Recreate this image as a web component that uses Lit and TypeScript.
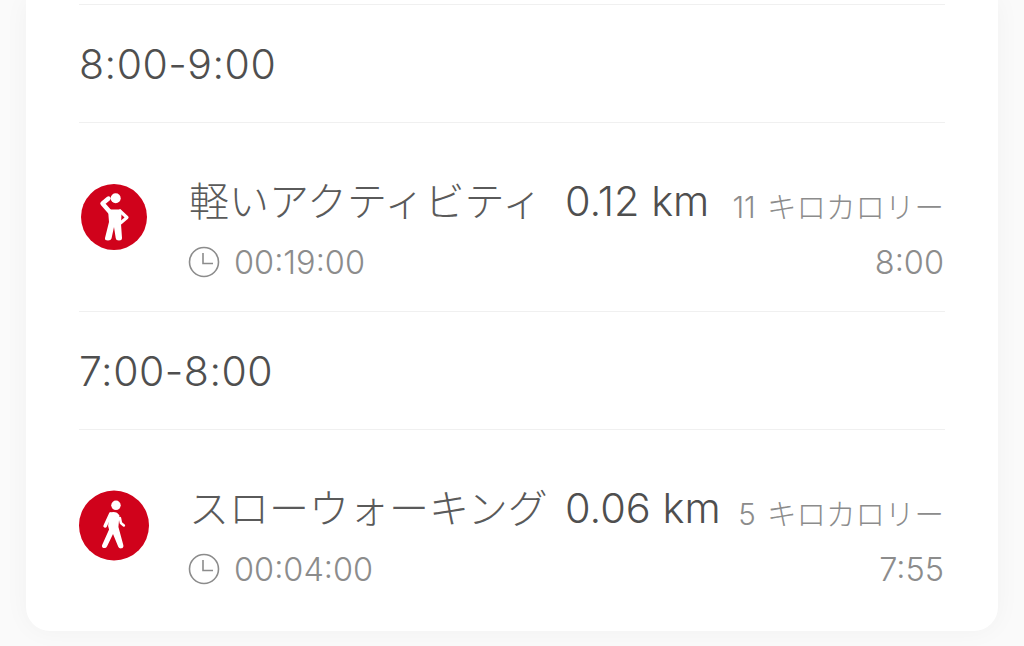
import { LitElement, html, css, svg } from "lit";
import { customElement } from "lit/decorators.js";

const stretching = svg`
  <circle cx="33" cy="33" r="33" fill="#d0021b"></circle>
  <circle cx="34.7" cy="14.2" r="5" fill="#fff"></circle>
  <path d="M28.5 27.5 L21.5 19.5 L27.5 14.5" fill="none" stroke="#fff" stroke-width="4.4" stroke-linecap="round" stroke-linejoin="round"></path>
  <path d="M39 27 L46 33.5 L39.5 39" fill="none" stroke="#fff" stroke-width="3.2" stroke-linecap="round" stroke-linejoin="round"></path>
  <path d="M27 25.5 H40 L40.5 30 L40 40 L41 54 Q41 56.5 38 56.5 Q35 56.5 34.7 54 L33 43 L30.5 54.5 Q30 56.5 27 56.5 Q23.5 56.5 24 54 L28 38 Z" fill="#fff"></path>
`;

const walking = svg`
  <circle cx="35.5" cy="35.5" r="35.5" fill="#d0021b"></circle>
  <circle cx="37.5" cy="15" r="4.8" fill="#fff"></circle>
  <path d="M32 24 L26.5 36" fill="none" stroke="#fff" stroke-width="3.6" stroke-linecap="round"></path>
  <path d="M41.5 28 L42.5 33 L45.5 35.5" fill="none" stroke="#fff" stroke-width="2.6" stroke-linecap="round" stroke-linejoin="round"></path>
  <path d="M31 22.5 Q35 21 38.5 22.5 L41 25 L40 37 L45 55.5 Q45.5 58.5 42.5 58.7 Q40.5 58.8 39.8 57 L34.5 44 L28.5 56.5 Q27.3 59 24.8 58.2 Q22.6 57.4 23.6 55 L30.5 39.5 L29.5 36 Z" fill="#fff"></path>
`;

const rows = [
  {
    range: "8:00-9:00",
    name: "軽いアクティビティ",
    distance: "0.12 km",
    kcal: "11 キロカロリー",
    duration: "00:19:00",
    start: "8:00",
    icon: stretching,
    size: 66,
  },
  {
    range: "7:00-8:00",
    name: "スローウォーキング",
    distance: "0.06 km",
    kcal: "5 キロカロリー",
    duration: "00:04:00",
    start: "7:55",
    icon: walking,
    size: 71,
  },
];

@customElement("app-root")
export class AppRoot extends LitElement {
  static styles = css`
    :host {
      display: block;
      height: 646px;
      overflow: hidden;
      background: #fafafa;
      font-family: Inter, "Noto Sans CJK JP", sans-serif;
    }

    .card {
      margin: 0 26px;
      height: 631px;
      box-sizing: border-box;
      padding: 4px 53px 0;
      background: #fff;
      border-radius: 0 0 24px 24px;
      box-shadow: 0 0 26px rgba(0, 0, 0, 0.04);
    }

    .range {
      display: flex;
      align-items: center;
      height: 117px;
      border-top: 1px solid #f0f0f0;
      border-bottom: 1px solid #f0f0f0;
      font-size: 41px;
      letter-spacing: 0.5px;
      font-weight: 300;
      color: #4f4f4f;
    }

    .row {
      display: flex;
      align-items: flex-start;
      height: 188px;
    }

    .row:last-child {
      height: auto;
    }

    .icon-box {
      flex: none;
      width: 70px;
      margin-right: 40px;
      padding-top: 60px;
      display: flex;
      justify-content: center;
    }

    .small {
      margin-top: 1px;
    }

    .info {
      flex: 1;
      min-width: 0;
      padding-top: 53px;
    }

    .line {
      display: flex;
      align-items: center;
      justify-content: space-between;
    }

    .title {
      height: 48px;
    }

    .meta {
      height: 40px;
      margin-top: 18px;
      font-size: 32.5px;
      font-weight: 300;
      color: #8c8c8c;
    }

    .head {
      display: flex;
      align-items: center;
    }

    .name {
      width: 376px;
      margin-top: -2px;
      font-size: 40px;
      font-weight: 300;
      color: #5a5a5a;
      white-space: nowrap;
    }

    .distance {
      margin-top: 2px;
      font-size: 41.5px;
      font-weight: 300;
      color: #4f4f4f;
      white-space: nowrap;
    }

    .kcal {
      margin-top: 10px;
      margin-right: 1px;
      font-size: 29.5px;
      word-spacing: 3px;
      font-weight: 300;
      color: #8c8c8c;
      white-space: nowrap;
    }

    .duration {
      display: flex;
      align-items: center;
      gap: 14px;
    }

    .clock {
      display: block;
      margin-left: -1px;
    }

    .start {
      margin-right: 1px;
    }
  `;

  render() {
    return html`
      <div class="card">
        ${rows.map(
          (row) => html`
            <div class="range">${row.range}</div>
            <div class="row">
              <div class="icon-box">
                <svg class=${row.size < 70 ? "small" : ""} width=${row.size} height=${row.size} viewBox="0 0 ${row.size} ${row.size}">
                  ${row.icon}
                </svg>
              </div>
              <div class="info">
                <div class="line title">
                  <div class="head">
                    <span class="name">${row.name}</span>
                    <span class="distance">${row.distance}</span>
                  </div>
                  <span class="kcal">${row.kcal}</span>
                </div>
                <div class="line meta">
                  <span class="duration">
                    <svg class="clock" width="32" height="32" viewBox="0 0 32 32" fill="none" stroke="#8c8c8c" stroke-width="1.6">
                      <circle cx="16" cy="16" r="14.5"></circle>
                      <path d="M15 7 V17.5 H25"></path>
                    </svg>
                    ${row.duration}
                  </span>
                  <span class="start">${row.start}</span>
                </div>
              </div>
            </div>
          `
        )}
      </div>
    `;
  }
}
